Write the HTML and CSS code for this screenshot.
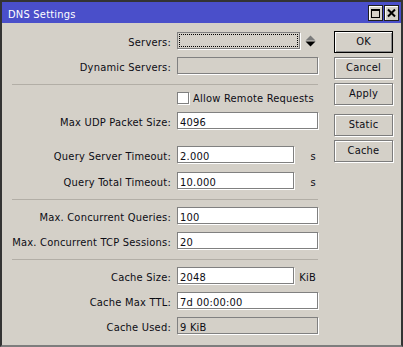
FILE: index.html
```html
<!DOCTYPE html>
<html lang="en">
  <head>
    <meta charset="UTF-8" />
    <meta name="viewport" content="width=device-width, initial-scale=1.0" />
    <link rel="stylesheet" href="styles.css">
    <title>DNS Settings</title>
  </head>
  <body>
    <div class="window">
      <div class="titlebar">
        <span class="title">DNS Settings</span>
        <div class="title-btns">
          <span class="tbtn">
            <svg width="13" height="14" viewBox="0 0 13 14">
              <rect x="2.5" y="3.5" width="8" height="8" fill="none" stroke="#000" />
              <line x1="2" y1="4.5" x2="11" y2="4.5" stroke="#000" />
            </svg>
          </span>
          <span class="tbtn">
            <svg width="13" height="14" viewBox="0 0 13 14">
              <path d="M3 3.5 L10 10.5 M10 3.5 L3 10.5" stroke="#000" stroke-width="2" />
            </svg>
          </span>
        </div>
      </div>

      <div class="content">
        <div class="form">
          <!-- servers -->
          <div class="row">
            <label>Servers:</label>
            <div class="combo"><span class="focus"></span></div>
            <svg class="spin" width="11" height="12" viewBox="0 0 11 12">
              <path d="M0.5 5.5 L5.5 0.5 L10.5 5.5 Z" fill="#7a7a7a" />
              <path d="M0.5 6.5 L10.5 6.5 L5.5 11.5 Z" fill="#000" />
            </svg>
          </div>
          <div class="row">
            <label>Dynamic Servers:</label>
            <div class="field wide disabled"></div>
          </div>

          <div class="sep"></div>

          <div class="row check-row">
            <span class="checkbox"></span>
            <span class="check-text">Allow Remote Requests</span>
          </div>
          <div class="row">
            <label>Max UDP Packet Size:</label>
            <div class="field wide">4096</div>
          </div>

          <div class="row gap-lg">
            <label>Query Server Timeout:</label>
            <div class="field short">2.000</div>
            <span class="unit">s</span>
          </div>
          <div class="row gap-8">
            <label>Query Total Timeout:</label>
            <div class="field short">10.000</div>
            <span class="unit">s</span>
          </div>

          <div class="sep"></div>

          <div class="row">
            <label>Max. Concurrent Queries:</label>
            <div class="field wide">100</div>
          </div>
          <div class="row">
            <label>Max. Concurrent TCP Sessions:</label>
            <div class="field wide">20</div>
          </div>

          <div class="sep"></div>

          <div class="row">
            <label>Cache Size:</label>
            <div class="field short">2048</div>
            <span class="unit">KiB</span>
          </div>
          <div class="row">
            <label>Cache Max TTL:</label>
            <div class="field wide">7d 00:00:00</div>
          </div>
          <div class="row">
            <label>Cache Used:</label>
            <div class="field wide disabled">9 KiB</div>
          </div>
        </div>

        <div class="buttons">
          <div class="btn btn-default">OK</div>
          <div class="btn">Cancel</div>
          <div class="btn">Apply</div>
          <div class="btn btn-sep">Static</div>
          <div class="btn">Cache</div>
        </div>
      </div>
    </div>
  </body>
</html>
```

FILE: styles.css
```css
body {
  margin: 0;
  background: #d4d0c8;
  font-family: "DejaVu Sans Condensed", "DejaVu Sans", sans-serif;
  font-size: 11px;
  line-height: 13px;
  letter-spacing: 0.22px;
  color: #0c0c14;
}
.window {
  width: 403px;
  height: 347px;
  box-sizing: border-box;
  border: 2px solid #333;
  border-bottom-color: #7d7d7d;
  display: flex;
  flex-direction: column;
}
.titlebar {
  height: 21px;
  flex-shrink: 0;
  background: #4a4fca;
  color: #fff;
  display: flex;
  align-items: flex-start;
  padding: 0 2px 0 6px;
}
.title {
  margin-top: 6px;
}
.title-btns {
  margin-left: auto;
  margin-top: 3px;
  display: flex;
  gap: 1px;
}
.tbtn {
  box-sizing: border-box;
  width: 15px;
  height: 16px;
  background: #d4d0c8;
  border: 1px solid #1e1e1e;
  box-shadow: inset 1px 1px 0 #fff;
  display: flex;
  align-items: center;
  justify-content: center;
}
.content {
  flex: 1;
  display: flex;
}
.form {
  padding: 9px 0 0 10px;
  width: 306px;
}
.row {
  display: flex;
  align-items: flex-start;
  height: 18px;
}
.row + .row {
  margin-top: 7px;
}
.row.gap-lg {
  margin-top: 16px;
}
.row.gap-8 {
  margin-top: 8px;
}
.row label {
  width: 159px;
  margin-right: 6px;
  padding-top: 4px;
  display: flex;
  justify-content: flex-end;
  white-space: nowrap;
}
.field {
  box-sizing: border-box;
  height: 17px;
  border: 1px solid #808080;
  background: #fff;
  box-shadow: 1px 1px 0 #fff;
  padding: 3px 0 0 2px;
  white-space: nowrap;
}
.wide {
  width: 141px;
}
.short {
  width: 117px;
}
.disabled {
  background: #d4d0c8;
}
.combo {
  box-sizing: border-box;
  width: 123px;
  height: 17px;
  border: 1px solid #808080;
  box-shadow: 1px 1px 0 #fff;
  padding: 1px;
}
.focus {
  display: block;
  height: 100%;
  box-sizing: border-box;
  border: 1px dotted #000;
}
.spin {
  margin: 3px 0 0 5px;
}
.unit {
  width: 24px;
  box-sizing: border-box;
  padding: 4px 2px 0 0;
  text-align: right;
}
.sep {
  border-top: 1px solid #b2aea6;
  margin: 9px 0 7px 0;
}
.check-row {
  height: 13px;
  padding-left: 165px;
}
.checkbox {
  box-sizing: border-box;
  width: 12px;
  height: 12px;
  background: #fff;
  border: 1px solid #808080;
  box-shadow: 1px 1px 0 #fff;
}
.check-text {
  margin-left: 4px;
  white-space: nowrap;
}
.buttons {
  margin-left: 16px;
  padding-top: 8px;
  display: flex;
  flex-direction: column;
  gap: 4px;
}
.btn {
  box-sizing: border-box;
  width: 59px;
  height: 22px;
  border: 1px solid #7c7c7c;
  box-shadow: inset 1px 1px 0 #fff, 1px 1px 0 #fff;
  text-align: center;
  line-height: 20px;
}
.btn-default {
  border-color: #000;
  box-shadow: inset 1px 1px 0 #fff, inset -1px -1px 0 #8a8a8a;
}
.btn-sep {
  margin-top: 5px;
}
```
